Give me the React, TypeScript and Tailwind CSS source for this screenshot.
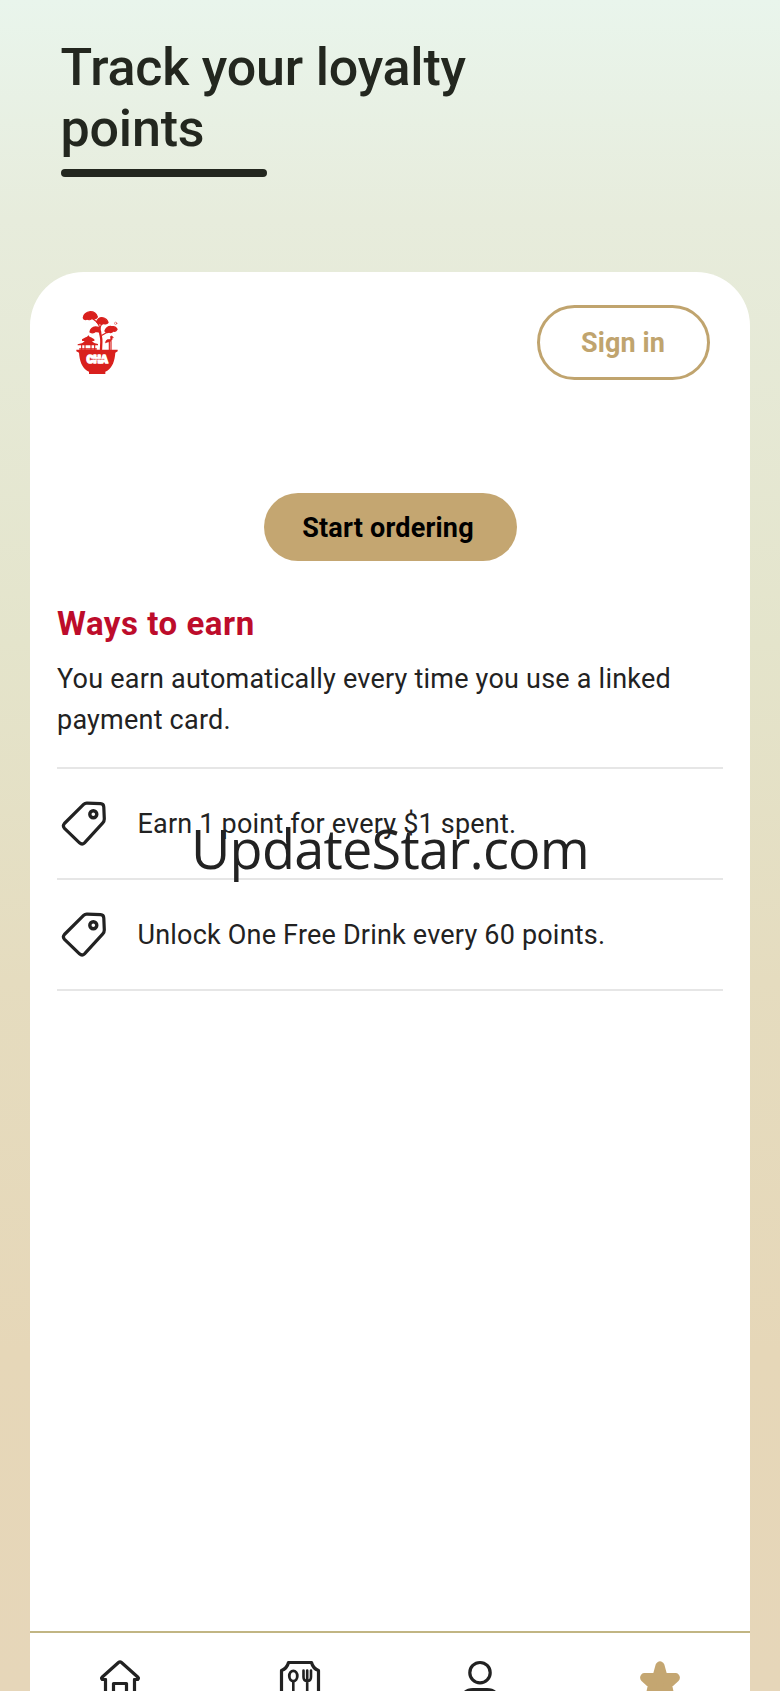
const Logo = () => (
  <svg
    className="w-20 h-[84px]"
    viewBox="0 0 240 252"
    fill="none"
    stroke="#d9201d"
    strokeLinecap="round"
    strokeLinejoin="round"
  >
    <g fill="#d9201d" strokeWidth="4">
      <path d="M70 53c0-9 9-17 21-18 13 0 19 9 21 16-4 7-12 7-16 4-4 5-11 5-15 2-4 3-9 2-11-4z" />
      <path d="M110 66c1-8 9-14 17-13 10 1 16 9 17 15-4 5-9 4-13 2-7 4-15 2-21-4z" />
      <path d="M90 96c1-8 8-15 16-15 8 0 13 5 13 11-4 5-9 3-12 2-5 5-11 6-17 2z" />
      <path d="M135 93c2-8 10-15 18-14 11 0 17 6 18 9-4 7-9 6-11 5-5 5-10 5-13 3-4 3-8 2-12-3z" />
    </g>
    <g fill="#d9201d" stroke="none">
      <path d="M49 149h124v5l-7 4c-2 24-8 43-24 54l-6 3v7H87v-7l-6-3c-16-11-22-30-24-54l-8-4z" />
      <path d="M77 112c4-1 6-3 8-7 2 4 4 6 8 7l10 6v4H66v-4z" />
      <path d="M65 130c5-3 8-5 9-8h22c1 3 4 5 9 8l9 2v4H53v-3z" />
    </g>
    <g fill="#d9201d" strokeWidth="2">
      <path d="M138 123c2-4 6-5 12-4l3-5c-3-2-2-5 1-6l4 2 2 3-4-1c2 5-1 10-5 12-5 2-10 2-14 4z" />
    </g>
    <path d="M96 55l14 10 7 11 3 20M127 68l-6 12-1 16M108 93l10 4M152 91l-26 15" strokeWidth="3.5" />
    <path d="M120 94c1 13 5 19 4 32l-1 23" strokeWidth="7" />
    <path d="M65 135v13M75 135v13M93 135v13M104 135v13M148 124v25M153 124v25" strokeWidth="3.5" />
    <path d="M59 147h50M69 121h32" strokeWidth="4" />
    <circle cx="167" cy="70" r="3.5" strokeWidth="1.5" />
    <text
      x="80"
      y="190"
      textLength="63"
      lengthAdjust="spacingAndGlyphs"
      fill="#fff"
      stroke="#fff"
      strokeWidth="5"
      fontSize="30"
      fontWeight="900"
      fontFamily="Roboto, sans-serif"
    >
      CHA
    </text>
    <path d="M92 178h40" strokeWidth="2" strokeDasharray="5 4" />
  </svg>
);

const TagIcon = () => (
  <svg
    className="w-12 h-12 shrink-0"
    viewBox="0 0 48 48"
    fill="none"
    stroke="#222"
    strokeWidth="3.2"
    strokeLinejoin="round"
  >
    <path d="M23.6 5.4Q25 4 27 4.1L40.6 4.7Q43.6 4.9 43.8 8.1L44.3 19.9Q44.3 22.2 42.8 23.8L24.5 43.8Q22.1 46.1 19.5 43.8L4.5 29.3Q2.3 26.9 4.4 24.5Z" />
    <circle cx="33.3" cy="15.2" r="3.5" strokeWidth="3.4" />
  </svg>
);

const HomeIcon = () => (
  <svg className="w-12 h-12" viewBox="0 0 48 48" fill="none" stroke="#222" strokeWidth="3.2" strokeLinecap="round" strokeLinejoin="round">
    <path d="M9.5 24.5H6.2Q5 23.2 6.3 22L22.5 7.5Q24 6.2 25.5 7.5L41.7 22Q43 23.2 41.8 24.5H38.5" />
    <path d="M9.5 24.5V48M38.5 24.5V48M17.5 48V28.5H30.5V48" />
  </svg>
);

const MenuIcon = () => (
  <svg className="w-12 h-12" viewBox="0 0 48 48" fill="none" stroke="#222" strokeWidth="3.2" strokeLinecap="round" strokeLinejoin="round">
    <path d="M5.5 48V15.5Q11 13.5 12.5 7.5H35.5Q37 13.5 42.5 15.5V48" />
    <ellipse cx="17.3" cy="21" rx="4" ry="5.2" strokeWidth="2.8" />
    <path d="M17.3 26.5V48M27.5 15.5V22Q27.5 26 31.2 26Q35 26 35 22V15.5M31.2 15.5V48" strokeWidth="2.6" />
  </svg>
);

const UserIcon = () => (
  <svg className="w-12 h-12" viewBox="0 0 48 48" fill="none" stroke="#222" strokeWidth="3.2">
    <circle cx="24" cy="17.7" r="10.2" />
    <path d="M5 48Q6 34.5 17 34.5H31Q42 34.5 43 48" />
  </svg>
);

const StarIcon = () => (
  <svg className="w-12 h-12" viewBox="0 0 48 48" fill="#c4a671" stroke="#c4a671" strokeWidth="9" strokeLinejoin="round">
    <path d="M24 10.8L27.2 22.4L39.4 22.6L31.5 30L34 41.3L24 35L14 41.3L16.5 30L8.6 22.6L20.8 22.4Z" />
  </svg>
);

const rewards = ["Earn 1 point for every $1 spent.", "Unlock One Free Drink every 60 points."];

const App = () => {
  return (
    <div className="relative flex flex-col w-[780px] h-[1691px] overflow-hidden bg-[linear-gradient(180deg,#e9f5ec_0%,#e7ecdc_13%,#e4e4cb_38%,#e5dcbf_58%,#e6d7b8_80%,#e6d6b9_100%)] font-['Roboto',sans-serif] text-[#222]">
      <header className="h-[272px] shrink-0 pl-[60.5px] pt-[37px]">
        <h1 className="w-[460px] text-[52px] leading-[61px] font-medium tracking-[-0.2px] text-[#23271f]">
          Track your loyalty points
        </h1>
        <div className="mt-2.5 w-[206px] h-2 rounded-full bg-[#23271f]" />
      </header>
      <main className="mx-[30px] flex flex-col grow rounded-t-[54px] bg-white">
        <div className="flex justify-between pl-[30px] pr-10 pt-7">
          <Logo />
          <button className="mt-[5px] w-[173px] h-[75px] rounded-full border-3 border-[#c0a46e] pt-0.5 pr-px text-[27px] font-bold tracking-[0.1px] text-[#c0a46e]">
            Sign in
          </button>
        </div>
        <button className="mt-[109px] w-[253px] h-[67.5px] self-center rounded-full bg-[#c4a671] pt-0.5 pr-1 text-[27px] font-bold tracking-[0.2px] text-black">
          Start ordering
        </button>
        <section className="mx-[27px] mt-[43px]">
          <h2 className="text-[33px] leading-10 font-bold tracking-[0.55px] text-[#bd0c2b]">Ways to earn</h2>
          <p className="mt-[15px] pb-[26px] text-[27px] leading-[41px] tracking-[0.22px]">
            You earn automatically every time you use a linked payment card.
          </p>
          <ul className="border-t-2 border-[#e6e6e6]">
            {rewards.map((reward) => (
              <li key={reward} className="flex items-center h-[111px] gap-[29.5px] pl-[3px] border-b-2 border-[#e6e6e6] text-[27px] tracking-[0.2px]">
                <TagIcon />
                <span className="pt-0.5">{reward}</span>
              </li>
            ))}
          </ul>
        </section>
        <nav className="mt-auto h-[60px] grid grid-cols-4 justify-items-center pt-[22px] border-t-2 border-[#c1b583]">
          <HomeIcon />
          <MenuIcon />
          <UserIcon />
          <StarIcon />
        </nav>
      </main>
      <div className="absolute left-0 top-[810px] w-full text-center font-['Open_Sans',sans-serif] text-[54px] leading-[76px] tracking-[-0.75px]">
        UpdateStar.com
      </div>
    </div>
  );
};

export default App;
